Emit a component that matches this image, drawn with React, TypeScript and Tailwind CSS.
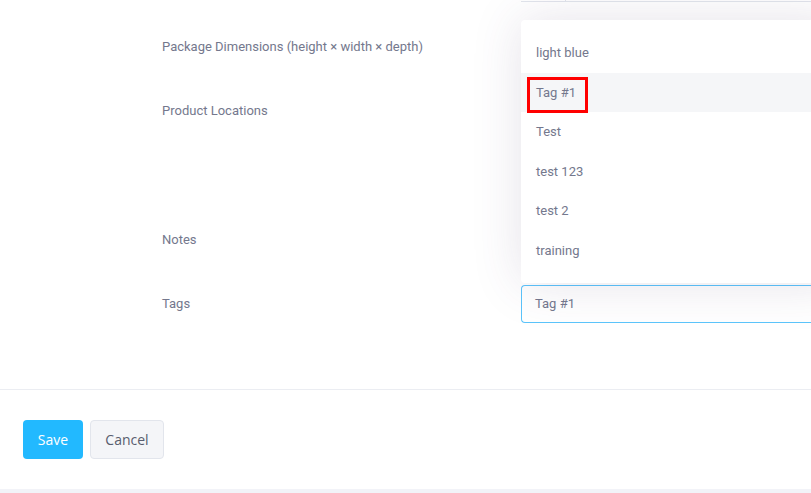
import React from "react";

const items = ["light blue", "Tag #1", "Test", "test 123", "test 2", "training"];

export default function App() {
  return (
    <div className="relative min-h-screen w-[811px] overflow-hidden bg-[#f2f3f8] font-['Roboto',sans-serif]">
      <div className="bg-white">
        {/* form */}
        <div className="relative flex flex-col">
          {/* edge of the previous input */}
          <div className="flex h-[2px]">
            <div className="w-[521px]" />
            <div className="relative flex-1 border-b border-[#e2e5ec]">
              <div className="absolute left-[44px] top-0 h-[2px] w-px bg-[#e2e5ec]" />
            </div>
          </div>

          <div className="mt-[35px] flex h-5 items-center pl-[162px] text-[13px] leading-5 text-[#74788d]">
            Package Dimensions (height × width × depth)
          </div>
          <div className="mt-[44px] flex h-5 items-center pl-[162px] text-[13px] leading-5 text-[#74788d]">
            Product Locations
          </div>
          <div className="mt-[109px] flex h-5 items-center pl-[162px] text-[13px] leading-5 text-[#74788d]">
            Notes
          </div>
          <div className="mt-[35px] flex h-[38px] items-center">
            <div className="w-[521px] pl-[162px] text-[13px] text-[#74788d]">Tags</div>
            <div className="flex h-full flex-1 items-center rounded-l-[4px] border border-r-0 border-[#5bc4fb] bg-white pl-[13px] text-[13px] text-[#74788d]">
              Tag #1
            </div>
          </div>
          <div className="h-[66px]" />

          {/* dropdown menu */}
          <div className="absolute left-[521px] top-[20px] w-[320px] rounded-[4px] bg-white py-[13px] shadow-[0_0_50px_0_rgba(82,63,105,0.15)]">
            {items.map((t) => (
              <div
                key={t}
                className={
                  t === "Tag #1"
                    ? "relative flex h-[39.5px] items-center bg-[#f5f6f8] pl-[15px] text-[13px] text-[#74788d]"
                    : "relative flex h-[39.5px] items-center pl-[15px] text-[13px] text-[#74788d]"
                }
              >
                {t}
                {t === "Tag #1" && (
                  <div className="absolute left-[6px] top-[4px] h-[36px] w-[61px] border-[3px] border-[#ff0000]" />
                )}
              </div>
            ))}
          </div>
        </div>

        {/* footer */}
        <div className="flex gap-[7px] border-t border-[#ebedf2] px-[23px] pb-[30px] pt-[30px] font-['Open_Sans',sans-serif]">
          <button className="h-[39px] w-[60px] rounded-[4px] bg-[#22b9ff] text-[14px] text-white">Save</button>
          <button className="h-[39px] w-[74px] rounded-[4px] border border-[#e2e5ec] bg-[#f4f5f8] text-[14px] text-[#595d6e]">
            Cancel
          </button>
        </div>
      </div>
    </div>
  );
}
